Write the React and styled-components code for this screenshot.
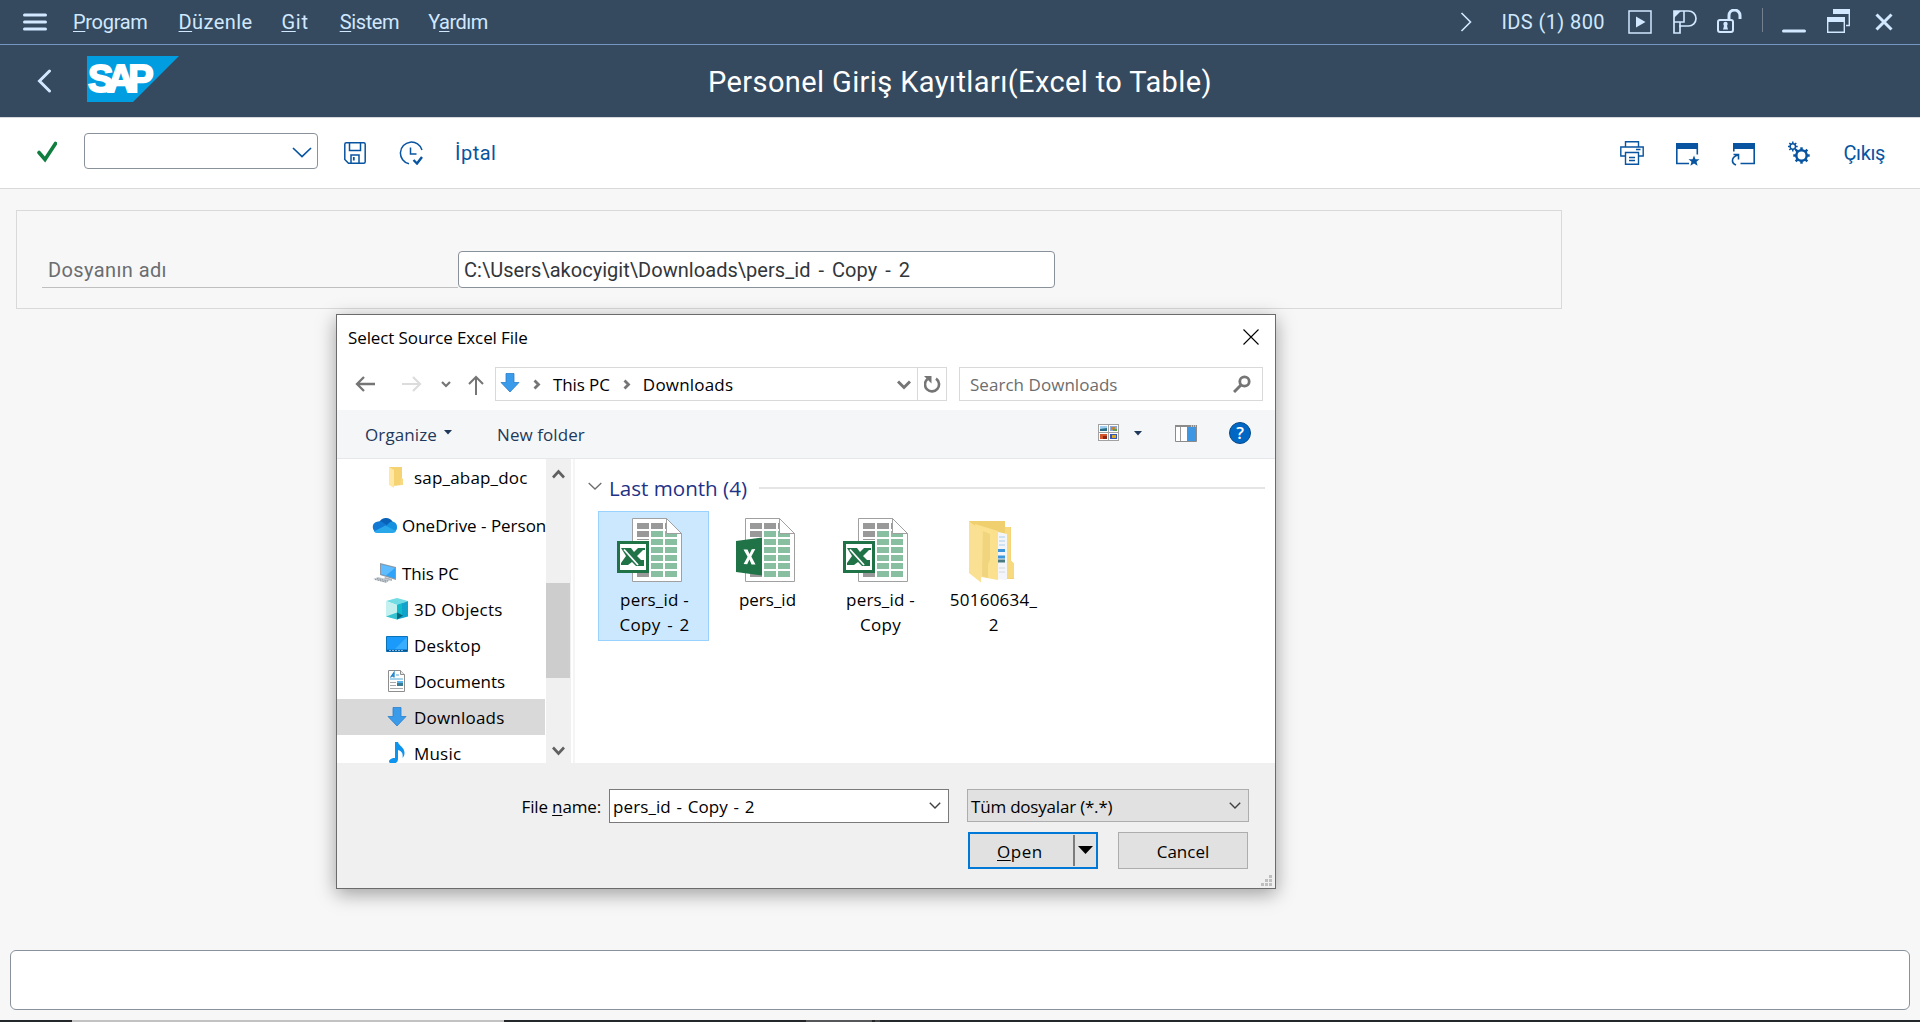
import React from 'react';
import styled, { createGlobalStyle, css } from 'styled-components';

const GlobalStyle = createGlobalStyle`
  * { box-sizing: border-box; }
  html, body { margin: 0; padding: 0; }
  body { width: 1920px; height: 1022px; overflow: hidden; background: #f7f7f7; }
`;

/* ---------- text ---------- */
const SapText = styled.span`
  font-family: Roboto, "Liberation Sans", sans-serif;
  font-size: ${(p) => p.$size || 20}px;
  line-height: ${(p) => p.$line || 30}px;
  letter-spacing: ${(p) => p.$ls || 0}px;
  word-spacing: ${(p) => p.$ws || 0}px;
  margin-left: ${(p) => p.$ml || 0}px;
  color: ${(p) => p.$color || 'inherit'};
  white-space: pre;
  u { text-decoration: underline; text-decoration-thickness: 1px; text-underline-offset: 2px; text-decoration-skip-ink: none; }
`;

const WinText = styled.span`
  font-family: "Open Sans", "Noto Sans", sans-serif;
  font-size: ${(p) => p.$size || 17}px;
  line-height: ${(p) => p.$line || 25}px;
  letter-spacing: ${(p) => p.$ls || 0}px;
  word-spacing: ${(p) => p.$ws || 0}px;
  margin-left: ${(p) => p.$ml || 0}px;
  color: ${(p) => p.$color || '#000'};
  white-space: pre;
  flex: none;
  u { text-decoration: underline; text-decoration-thickness: 1px; text-underline-offset: 2px; text-decoration-skip-ink: none; }
`;

const Icon = styled.svg.attrs((p) => ({
  width: p.$w, height: p.$h, viewBox: `0 0 ${p.$w} ${p.$h}`, fill: 'none',
}))`
  display: block;
  flex: none;
  margin-left: ${(p) => p.$ml || 0}px;
  margin-top: ${(p) => p.$mt || 0}px;
`;

/* ---------- page ---------- */
const Page = styled.div`
  position: relative;
  width: 1920px;
  height: 1022px;
  display: flex;
  flex-direction: column;
  background: #f7f7f7;
  overflow: hidden;
`;

const MenuBar = styled.header`
  display: flex;
  align-items: center;
  height: 45px;
  flex: none;
  padding-left: 23px;
  color: #d1e8ff;
  background: #354a5f;
  border-bottom: 1px solid #7596c0;
`;

const Spread = styled.div`flex: 1;`;

const Group = styled.div`
  display: flex;
  align-items: center;
  padding-right: ${(p) => p.$pr || 0}px;
`;

const MenuDivider = styled.div`
  width: 1px;
  height: 24px;
  margin-left: 20px;
  margin-top: -4px;
  background: #73818f;
`;

const TitleBar = styled.div`
  display: grid;
  grid-template-columns: 400px 1fr 400px;
  align-items: center;
  height: 73px;
  flex: none;
  background: #354a5f;
  border-bottom: 1px solid #d5d9dd;
`;

const TitleLeft = styled.div`
  display: flex;
  align-items: center;
  padding-left: 37px;
`;

const TitleText = styled.div`
  text-align: center;
  padding-top: 1px;
  color: #fff;
`;

const ActionBar = styled.div`
  display: flex;
  align-items: center;
  height: 71px;
  flex: none;
  padding-left: 37px;
  color: #0854a0;
  background: #fff;
  border-bottom: 1px solid #d9d9d9;
`;

const CommandField = styled.div`
  display: flex;
  align-items: center;
  justify-content: flex-end;
  width: 234px;
  height: 36px;
  margin: -4px 0 0 27px;
  padding: 2px 5px 0 0;
  border: 1px solid #89919a;
  border-radius: 4px;
  background: #fff;
`;

const FormPanel = styled.section`
  display: flex;
  align-items: flex-start;
  width: 1546px;
  height: 99px;
  margin: 21px 0 0 16px;
  padding: 40px 0 0 25px;
  border: 1px solid #d9d9d9;
  flex: none;
`;

const FieldLabel = styled.label`
  display: flex;
  align-items: center;
  width: 416px;
  height: 37px;
  padding: 1px 0 0 6px;
  color: #6a6d70;
  border-bottom: 1px solid #bfbfbf;
`;

const FieldInput = styled.div`
  display: flex;
  align-items: center;
  width: 597px;
  height: 37px;
  padding: 1px 0 0 5px;
  color: #32363a;
  background: #fff;
  border: 1px solid #89919a;
  border-radius: 4px;
`;

const StatusBox = styled.footer`
  flex: none;
  height: 60px;
  margin: auto 10px 10px;
  background: #fff;
  border: 1px solid #89919a;
  border-radius: 6px;
`;

const TaskStrip = styled.div`
  display: flex;
  height: 2px;
  flex: none;
  background: #24272a;
`;
const TaskSegment = styled.div`
  width: ${(p) => p.$w}px;
  background: ${(p) => p.$c};
`;

/* ---------- dialog ---------- */
const Dialog = styled.div`
  position: absolute;
  left: 336px;
  top: 314px;
  width: 940px;
  height: 575px;
  display: flex;
  flex-direction: column;
  background: #fff;
  border: 1px solid #6b6b6b;
  box-shadow: 0 5px 18px rgba(0, 0, 0, 0.36);
`;

const DialogTitle = styled.div`
  display: flex;
  align-items: center;
  justify-content: space-between;
  height: 45px;
  flex: none;
  padding: 0 16px 0 11px;
`;

const NavRow = styled.div`
  display: flex;
  align-items: center;
  height: 34px;
  flex: none;
  margin-top: 7px;
  padding-left: 18px;
`;

const NavBox = styled.div`
  display: flex;
  align-items: center;
  width: ${(p) => p.$w}px;
  height: 34px;
  margin-left: ${(p) => p.$ml}px;
  border: 1px solid #d9d9d9;
  background: #fff;
`;

const RefreshCell = styled.div`
  display: flex;
  align-items: center;
  justify-content: center;
  width: 29px;
  height: 32px;
  padding-left: 1px;
  border-left: 1px solid #d9d9d9;
`;

const ToolRow = styled.div`
  display: flex;
  align-items: center;
  height: 49px;
  flex: none;
  margin-top: 9px;
  padding: 0 24px 0 28px;
  background: #f5f6f7;
  border-bottom: 1px solid #e5e7ea;
`;

const Body = styled.div`
  display: flex;
  height: 304px;
  flex: none;
`;

const Tree = styled.nav`
  width: 209px;
  height: 304px;
  overflow: hidden;
`;

const TreeRow = styled.div`
  display: flex;
  align-items: center;
  width: ${(p) => (p.$active ? 208 : 209)}px;
  height: 36px;
  margin-bottom: ${(p) => p.$gap || 0}px;
  padding-left: ${(p) => (p.$nested ? 48 : 35)}px;
  ${(p) => p.$active && css`background: #d9d9d9;`}
`;

const ScrollBar = styled.div`
  display: flex;
  flex-direction: column;
  width: 25px;
  padding-bottom: 7px;
  background: #f0f0f0;
`;
const ScrollThumb = styled.div`
  width: 24px;
  height: 95px;
  margin-top: 104px;
  margin-bottom: auto;
  background: #cdcdcd;
`;
const PaneEdge = styled.div`
  width: 2px;
  margin-left: 2px;
  background: #f5f5f5;
`;

const Files = styled.div`
  flex: 1;
  padding-left: 13px;
`;

const GroupHeader = styled.div`
  display: flex;
  align-items: center;
  height: 30px;
  margin-top: 14px;
`;
const GroupLine = styled.div`
  width: 506px;
  height: 2px;
  margin-left: 12px;
  background: #e5e5e5;
`;

const Tiles = styled.div`
  display: flex;
  gap: 2px;
  margin: 8px 0 0 10px;
`;
const Tile = styled.div`
  display: flex;
  flex-direction: column;
  align-items: center;
  width: 111px;
  height: 130px;
  padding-top: 5px;
  border: 1px solid ${(p) => (p.$selected ? '#99d1ff' : 'transparent')};
  background: ${(p) => (p.$selected ? '#cce8ff' : 'transparent')};
`;
const TileLabel = styled.div`
  display: flex;
  flex-direction: column;
  align-items: center;
  margin-top: 4px;
  padding-left: 2px;
`;

const Footer = styled.div`
  display: grid;
  grid-template-columns: 272px 340px 18px 282px;
  grid-template-rows: 34px 37px;
  row-gap: 9px;
  flex: 1;
  padding-top: 26px;
  background: #f0f0f0;
`;
const FooterLabel = styled.div`
  display: flex;
  align-items: center;
  justify-content: flex-end;
  padding-right: 8px;
`;
const Combo = styled.div`
  display: flex;
  align-items: center;
  justify-content: space-between;
  height: ${(p) => p.$h}px;
  padding: 1px 7px 0 3px;
  background: ${(p) => (p.$filled ? '#e1e1e1' : '#fff')};
  border: 1px solid ${(p) => (p.$filled ? '#adadad' : '#7a7a7a')};
`;
const Buttons = styled.div`
  grid-column: 4;
  display: flex;
  gap: 20px;
  padding-left: 1px;
`;
const Button = styled.button`
  display: flex;
  align-items: center;
  justify-content: ${(p) => (p.$primary ? 'flex-start' : 'center')};
  width: 130px;
  height: 37px;
  padding: 1px 0 0;
  background: #e1e1e1;
  border: ${(p) => (p.$primary ? '2px solid #0078d7' : '1px solid #adadad')};
  border-radius: 0;
`;
const SplitLine = styled.div`
  width: 2px;
  height: 31px;
  margin-left: 30px;
  margin-top: -1px;
  background: #7c7c7c;
`;
const Grip = styled.div`
  position: absolute;
  right: 3px;
  bottom: 2px;
`;

/* ---------- drawings ---------- */
const DownArrow = ({ ml, mt }) => (
  <Icon $w={20} $h={20} $ml={ml} $mt={mt}>
    <path d="M6 .5h8v9h5L10 19 1 9.500h5z" fill="#3a9bea" stroke="#2b7fcb" strokeWidth=".8" />
  </Icon>
);

const Sheet = () => (
  <>
    <path d="M15.500 1.500h34l15 15v48h-49z" fill="#fff" stroke="#a0a0a0" />
    {[6, 14, 22, 30, 38, 46, 54].map((y, r) =>
      [20, 34, 48].map((x, c) => {
        if (c === 2 && r === 0) return <path key={x} d="M48 6h1.500v6H48z" fill="#999" />;
        if (c === 2 && r === 1) return <path key={x} d="M48 14h2v2.500h10V20H48z" fill="#87bfa0" />;
        return <rect key={x} x={x} y={y} width="12" height="6" fill={c === 0 || r === 0 ? '#999' : '#87bfa0'} />;
      })
    )}
    <path d="M49.500 1.500v15h15z" fill="#fff" stroke="#a0a0a0" />
  </>
);

const OldExcel = () => (
  <Icon $w={73} $h={66}>
    <Sheet />
    <path d="M16 23h17v33H16z" fill="#fff" />
    <path d="M1.500 25.500h29v29h-29z" fill="#fff" stroke="#207347" strokeWidth="3" />
    <path d="M4 31h10l3 4 4-4h7v2h-2l-6 6 4 4h3v6h-8l-4-4-4 3H4v-2l5-7z" fill="#207347" />
    <path d="M7 32.500L21 48" stroke="#fff" strokeWidth="1.800" />
  </Icon>
);

const NewExcel = () => (
  <Icon $w={73} $h={66}>
    <Sheet />
    <path d="M6 24l26-3.500v38L6 55z" fill="#207347" />
    <path d="M13.500 32.500h4l2 4.500 2.300-4.800 3.500-.2-4 7.500 4.200 8h-3.900l-2.200-5-2.200 4.700-3.600-.2 4-7.300z" fill="#fff" />
  </Icon>
);

const FolderLarge = () => (
  <Icon $w={73} $h={66}>
    <path d="M13 4h36v6h6v34l3 3v15H40z" fill="#f0cf6e" />
    <path d="M49 10h5.500v33l3.500 3.500V61l-9 1z" fill="#f7d97f" />
    <path d="M38 14l13 3v46l-12-1z" fill="#f3f5f8" />
    <path d="M43 20h6M43 24h6M43 28h6" stroke="#a9d0f0" strokeWidth="1.200" />
    <path d="M42 33.500h7M42 40h7" stroke="#3e97dd" strokeWidth="3" />
    <path d="M42 44h7" stroke="#4a7a80" strokeWidth="3" />
    <path d="M43 51h6M43 55h6" stroke="#d5d8de" />
    <path d="M19 7l23 7v49l-17-3z" fill="#fbe08d" />
    <path d="M27 14l7 3v26l-2 4v14l-6-2z" fill="#ecd079" opacity=".75" />
    <path d="M13 4.500l13 9V49l-1 4v12.500L13 56z" fill="#fae092" />
  </Icon>
);

const SmallFolder = () => (
  <Icon $w={24} $h={24}>
    <path d="M4 2h13v18l-9 1-4-2z" fill="#f5d272" />
    <path d="M16 12l2 2v6h-3z" fill="#f7da84" />
    <path d="M4 2l5 3v18l-5-3z" fill="#ffe8a3" />
  </Icon>
);

const Cloud = () => (
  <Icon $w={26} $h={18} $mt={-1}>
    <path d="M7 7a7.500 7.500 0 0 1 13.500-1.500L22 12H6z" fill="#0a62b8" />
    <path d="M5.500 16.500A5.500 5.500 0 0 1 5 5.700 6 6 0 0 1 10 6l8 5-10 6z" fill="#1179d4" />
    <path d="M20 5.500a5 5 0 0 1 5 5.500 5 5 0 0 1-3 5l-8-6 3-3a6 6 0 0 1 3-1.500z" fill="#1490df" />
    <path d="M13.500 9.500L24 15a4 4 0 0 1-3 2H5.500a5 5 0 0 1-3.700-1.600z" fill="#28a8ea" />
  </Icon>
);

const Computer = () => (
  <Icon $w={26} $h={24}>
    <path d="M8 2l16 4v13L8 14z" fill="#8d9aa5" />
    <path d="M9 3.500l14 3.500v10.500L9 13z" fill="#2ea3f7" />
    <path d="M9 3.500L23 7l-9 7.500L9 13z" fill="#5ebcff" />
    <path d="M13 16l7 2v2l-8-2z" fill="#aeb5bc" />
    <path d="M1 18l5-2 12 3-4 3z" fill="#c5ccd2" />
    <path d="M3 18.500l11 2.500M5 17.500l11 2.500" stroke="#8b949c" strokeDasharray="1.500 1" />
  </Icon>
);

const Cube = () => (
  <Icon $w={24} $h={24}>
    <path d="M12 1l11 3-11 4L1 4z" fill="#71dce4" />
    <path d="M1 4l11 4v14.500L1 19.500z" fill="#c4f1f0" />
    <path d="M23 4L12 8v14.500l11-3z" fill="#10a4cc" />
    <path d="M12 8l5-1.800v12L12 17z" fill="#0ebbcb" />
    <path d="M1 19.500l11-4v7z" fill="#35c3d2" />
    <path d="M12 15.500l6 3-6 4z" fill="#07697c" />
  </Icon>
);

const Monitor = () => (
  <Icon $w={24} $h={20} $mt={-2}>
    <path d="M1.500 2.500h21v15h-21z" fill="#1a9bfc" stroke="#0c72b8" />
    <path d="M22 3v12H10z" fill="#39adff" />
    <path d="M2 16.500h20" stroke="#0a5184" strokeWidth="1.500" />
    <path d="M4 16.500h14" stroke="#9fd5ff" strokeWidth=".8" strokeDasharray="2 1" />
  </Icon>
);

const DocIcon = () => (
  <Icon $w={24} $h={24}>
    <path d="M3.500 1.500h12l4 4v17h-16z" fill="#fff" stroke="#8e8e8e" />
    <path d="M15.500 1.500v4h4" fill="#e8e8e8" stroke="#8e8e8e" />
    <path d="M5.500 8.500L9 3.500v5M6.500 7h3" stroke="#1d80c8" strokeWidth="1.300" />
    <path d="M11 6h3M5 10h13" stroke="#53a8dc" />
    <path d="M5 13.500h6M5 16.500h6M5 19.500h13" stroke="#a5a9ad" />
    <path d="M12 12h6v5h-6z" fill="#3a7c94" />
    <path d="M12 12h6v2h-6z" fill="#58b1ec" />
  </Icon>
);

const Note = () => (
  <Icon $w={24} $h={24}>
    <path d="M10 1h3c1 4 6.500 5 6.500 11 0 2-1 4-2 5 .8-5-1-7-4.500-8v9c0 3-2 4.500-4.500 4.500S4 22 4 20.500 6 17 10 17z" fill="#0e93ee" />
  </Icon>
);

const TREE = [
  { text: 'sap_abap_doc', ls: 0.19, icon: <SmallFolder />, nested: true, gap: 12 },
  { text: 'OneDrive - Person', ls: -0.02, icon: <Cloud />, gap: 12 },
  { text: 'This PC', ls: -0.1, icon: <Computer /> },
  { text: '3D Objects', ls: 0.23, icon: <Cube />, nested: true },
  { text: 'Desktop', ls: 0.2, icon: <Monitor />, nested: true },
  { text: 'Documents', ls: 0.02, icon: <DocIcon />, nested: true },
  { text: 'Downloads', ls: 0.2, icon: <DownArrow ml={2} mt={-1} />, nested: true, active: true },
  { text: 'Music', ls: 0.2, icon: <Note />, nested: true },
];

const FILES = [
  { icon: <OldExcel />, selected: true, lines: [['pers_id -', 0.2, 0], ['Copy - 2', 0.3, 1.8]] },
  { icon: <NewExcel />, lines: [['pers_id', 0, 0]] },
  { icon: <OldExcel />, lines: [['pers_id -', 0.2, 0], ['Copy', 0.3, 0]] },
  { icon: <FolderLarge />, lines: [['50160634_', 0.25, 0], ['2', 0, 0]] },
];

const MENU = [
  { ml: 26, ls: -0.3, parts: ['', 'P', 'rogram'] },
  { ml: 31, ls: 0.4, parts: ['', 'D', 'üzenle'] },
  { ml: 29, ls: 0.75, parts: ['', 'G', 'it'] },
  { ml: 31, ls: -0.36, parts: ['', 'S', 'istem'] },
  { ml: 29, ls: -0.5, parts: ['Y', 'a', 'rdım'] },
];

const BREADCRUMB = 'M1.500 1.500l4 4-4 4';

function Gear({ cx, cy, r, teeth, w, hole }) {
  return (
    <g stroke="#0854a0">
      <circle cx={cx} cy={cy} r={r} strokeWidth={w} />
      {Array.from({ length: teeth }, (_, i) => {
        const a = (i * 2 * Math.PI) / teeth;
        return (
          <path key={i} strokeWidth={w}
            d={`M${cx + Math.cos(a) * r} ${cy + Math.sin(a) * r}L${cx + Math.cos(a) * (r + hole)} ${cy + Math.sin(a) * (r + hole)}`} />
        );
      })}
    </g>
  );
}

export default function App() {
  return (
    <Page>
      <GlobalStyle />
      <MenuBar>
        <Icon $w={24} $h={18} $mt={-1}>
          <path d="M1.500 2h21M1.500 9h21M1.500 16h21" stroke="#d1e8ff" strokeWidth="3" strokeLinecap="round" />
        </Icon>
        {MENU.map((m) => (
          <SapText key={m.parts[1]} $ml={m.ml} $ls={m.ls}>{m.parts[0]}<u>{m.parts[1]}</u>{m.parts[2]}</SapText>
        ))}
        <Spread />
        <Group $pr={27}>
          <Icon $w={12} $h={20} $mt={-1}><path d="M1.500 1l9 9-9 9" stroke="#d1e8ff" strokeWidth="1.600" /></Icon>
          <SapText $ml={29} $ls={0.4}>IDS (1) 800</SapText>
          <Icon $w={24} $h={24} $ml={23} $mt={-1}>
            <path d="M1 1h22v22H1z" stroke="#d1e8ff" strokeWidth="1.500" />
            <path d="M8 6.500l9.500 5.500L8 17.500z" fill="#d1e8ff" />
          </Icon>
          <Icon $w={24} $h={24} $ml={21} $mt={-1}>
            <path d="M1 1h14.500a7.500 7.500 0 0 1 0 15H7v7H1z" stroke="#d1e8ff" strokeWidth="1.700" />
            <path d="M1 12h10V1M7 12v5" stroke="#d1e8ff" strokeWidth="1.600" />
            <path d="M1 1h7L1 8z" fill="#d1e8ff" />
          </Icon>
          <Icon $w={25} $h={24} $ml={20} $mt={-2}>
            <path d="M12 11V6.500a5.500 5.500 0 0 1 11 0V10" stroke="#d1e8ff" strokeWidth="3" />
            <rect x="1" y="11" width="15" height="12" rx="2" stroke="#d1e8ff" strokeWidth="2" />
            <circle cx="8.500" cy="15" r="2.200" fill="#d1e8ff" />
            <path d="M7.500 15h2l1.500 5.500H6z" fill="#d1e8ff" />
          </Icon>
          <MenuDivider />
          <Icon $w={24} $h={24} $ml={19} $mt={-3}>
            <path d="M1.500 22h21" stroke="#d1e8ff" strokeWidth="3" strokeLinecap="round" />
          </Icon>
          <Icon $w={24} $h={24} $ml={21} $mt={-2}>
            <path d="M6 0h17v5H6z" fill="#d1e8ff" />
            <path d="M22.300 2v14.500H19" stroke="#d1e8ff" strokeWidth="1.400" />
            <path d="M.7 8.700h16.600v14.600H.7z" stroke="#d1e8ff" strokeWidth="1.400" />
            <path d="M0 8h18v5H0z" fill="#d1e8ff" />
          </Icon>
          <Icon $w={18} $h={18} $ml={24} $mt={-1}>
            <path d="M1.500 1.500l15 15M16.500 1.500l-15 15" stroke="#d1e8ff" strokeWidth="3" />
          </Icon>
        </Group>
      </MenuBar>

      <TitleBar>
        <TitleLeft>
          <Icon $w={15} $h={24} $mt={-1}><path d="M12.500 2l-10 10 10 10" stroke="#d1e8ff" strokeWidth="3" strokeLinecap="round" /></Icon>
          <Icon $w={92} $h={46} $ml={35} $mt={-4}>
            <path d="M0 0h92L46 46H0z" fill="#009de0" />
            <text x="1" y="35.500" fill="#fff" stroke="#fff" strokeWidth="1.900" fontFamily='"Liberation Sans", sans-serif'
              fontWeight="700" fontSize="38" textLength="65.500" lengthAdjust="spacing">SAP</text>
          </Icon>
        </TitleLeft>
        <TitleText><SapText $size={29} $line={40} $ls={0.39}>Personel Giriş Kayıtları(Excel to Table)</SapText></TitleText>
      </TitleBar>

      <ActionBar>
        <Icon $w={20} $h={22} $mt={-2}><path d="M2 11.500l6 7L18.500 2.500" stroke="#107e3e" strokeWidth="3.600" strokeLinecap="round" /></Icon>
        <CommandField>
          <Icon $w={20} $h={11}><path d="M1 1l9 8.500L19 1" stroke="#0854a0" strokeWidth="1.700" /></Icon>
        </CommandField>
        <Icon $w={22} $h={22} $ml={26}>
          <path d="M.8 2.300C.8 1.500 1.500.8 2.300.8h17.400c.8 0 1.500.7 1.500 1.500v17.400c0 .8-.7 1.500-1.500 1.500H4.500L.8 17.500z" stroke="#0854a0" strokeWidth="1.500" />
          <path d="M5.500 1v7.500h11V1" stroke="#0854a0" strokeWidth="1.500" />
          <path d="M7 21v-8h8v8" stroke="#0854a0" strokeWidth="1.500" />
          <path d="M9.800 15v3.500" stroke="#0854a0" strokeWidth="1.800" />
        </Icon>
        <Icon $w={24} $h={24} $ml={33}>
          <path d="M23 9A11 11 0 1 0 10 22.800" stroke="#0854a0" strokeWidth="1.500" />
          <path d="M11.500 6.500v6.500h6" stroke="#0854a0" strokeWidth="1.500" />
          <path d="M14.500 19l3.500 3.500 5-6.500" stroke="#0854a0" strokeWidth="2.400" />
        </Icon>
        <SapText $ml={32} $ls={0.5}>İptal</SapText>
        <Spread />
        <Group $pr={35}>
          <Icon $w={24} $h={24}>
            <g stroke="#0854a0" strokeWidth="1.400">
              <path d="M5.500 6V.8h13V6M5.500 15H.8V6h22.400v9h-4.700" />
              <path d="M5.500 11.500h13v11.700h-13zM9 16.500h6M9 19.500h6M16 8.500h4.500" />
            </g>
          </Icon>
          <Icon $w={24} $h={24} $ml={32} $mt={1}>
            <path d="M0 1h22v6H0z" fill="#0854a0" />
            <path d="M.8 2v19.500H13M21.300 2v10.500" stroke="#0854a0" strokeWidth="1.600" />
            <path d="M18 13.500l1.500 3.700h4l-3 2.500 1.100 4.100-3.600-2.400-3.600 2.400 1.100-4.100-3-2.500h4z" fill="#0854a0" />
          </Icon>
          <Icon $w={24} $h={24} $ml={31} $mt={1}>
            <path d="M2 1h22v6H2z" fill="#0854a0" />
            <path d="M2.800 2v7.500M23.200 2v19.500H9.500" stroke="#0854a0" strokeWidth="1.600" />
            <path d="M5 23c-5-2-5-8 2-10M2.500 12.500h5v5" stroke="#0854a0" strokeWidth="1.600" />
          </Icon>
          <Icon $w={24} $h={24} $ml={33}>
            <Gear cx={4.800} cy={5.500} r={2.700} teeth={8} w={1.500} hole={2.200} />
            <Gear cx={13.500} cy={14.500} r={5.200} teeth={8} w={2.500} hole={3} />
          </Icon>
          <SapText $ml={31} $ls={-0.36}>Çıkış</SapText>
        </Group>
      </ActionBar>

      <FormPanel>
        <FieldLabel><SapText $ls={0.4}>Dosyanın adı</SapText></FieldLabel>
        <FieldInput><SapText $ls={0.04} $ws={3}>{'C:\\Users\\akocyigit\\Downloads\\pers_id - Copy - 2'}</SapText></FieldInput>
      </FormPanel>

      <StatusBox />
      <TaskStrip>
        <TaskSegment $w={72} $c="#24272a" />
        <TaskSegment $w={432} $c="#c2c2c2" />
        <TaskSegment $w={302} $c="#24272a" />
        <TaskSegment $w={66} $c="#555759" />
        <TaskSegment $w={3} $c="#24272a" />
        <TaskSegment $w={5} $c="#444648" />
      </TaskStrip>

      <Dialog>
        <DialogTitle>
          <WinText $ls={-0.1}>Select Source Excel File</WinText>
          <Icon $w={16} $h={16} $mt={-2}><path d="M.5.5l15 15M15.500.5l-15 15" stroke="#000" strokeWidth="1.100" /></Icon>
        </DialogTitle>

        <NavRow>
          <Icon $w={20} $h={16}><path d="M9 1L2 8l7 7M2 8h18" stroke="#757575" strokeWidth="2.300" /></Icon>
          <Icon $w={20} $h={16} $ml={27}><path d="M11 1l7 7-7 7M18 8H0" stroke="#dcdcdc" strokeWidth="2.200" /></Icon>
          <Icon $w={10} $h={7} $ml={19}><path d="M1 1l4 4 4-4" stroke="#757575" strokeWidth="2.200" /></Icon>
          <Icon $w={16} $h={20} $ml={17} $mt={2}><path d="M1 9l7-7 7 7M8 2v18" stroke="#757575" strokeWidth="2" /></Icon>
          <NavBox $w={452} $ml={11}>
            <DownArrow ml={4} mt={-3} />
            <Icon $w={8} $h={11} $ml={13}><path d={BREADCRUMB} stroke="#757575" strokeWidth="2.800" /></Icon>
            <WinText $ml={12} $ls={-0.1}>This PC</WinText>
            <Icon $w={8} $h={11} $ml={13}><path d={BREADCRUMB} stroke="#757575" strokeWidth="2.800" /></Icon>
            <WinText $ml={12} $ls={0.2}>Downloads</WinText>
            <Spread />
            <Icon $w={14} $h={10} $mt={2}><path d="M1 1.500l6 6 6-6" stroke="#757575" strokeWidth="3" /></Icon>
            <Icon $w={6} $h={10} />
            <RefreshCell>
              <Icon $w={17} $h={17}>
                <path d="M12 2.600A7 7 0 1 1 3.500 3" stroke="#757575" strokeWidth="2.600" />
                <path d="M0 0h7.500v7.500z" fill="#757575" />
              </Icon>
            </RefreshCell>
          </NavBox>
          <NavBox $w={304} $ml={12}>
            <WinText $ml={10} $ls={0.04} $color="#6d6d6d">Search Downloads</WinText>
            <Spread />
            <Icon $w={18} $h={18}>
              <circle cx="11.500" cy="6.500" r="4.700" stroke="#757575" strokeWidth="2.800" />
              <path d="M8 10l-7 7" stroke="#757575" strokeWidth="3" />
            </Icon>
            <Icon $w={11} $h={10} />
          </NavBox>
        </NavRow>

        <ToolRow>
          <WinText $ls={0.12} $color="#1e395b">Organize</WinText>
          <Icon $w={8} $h={5} $ml={7} $mt={-3}><path d="M0 0h8L4 4.500z" fill="#1e395b" /></Icon>
          <WinText $ml={45} $ls={0.07} $color="#1e395b">New folder</WinText>
          <Spread />
          <Icon $w={21} $h={17} $mt={-4}>
            <path d="M0 0h21v17H0z" fill="#a2a2a2" />
            <path d="M1 1h9v7H1zM11 1h9v7h-9zM1 9h9v7H1zM11 9h9v7h-9z" fill="#fff" />
            <path d="M2 2h7v5H2z" fill="#9fcdf0" />
            <path d="M2 5l7-1v3H2z" fill="#2b6d86" />
            <path d="M12 2h7v5h-7z" fill="#8aa9d8" />
            <path d="M13 3h4v3h-4z" fill="#c1853e" />
            <path d="M15 5h4v2h-4z" fill="#5d9f4e" />
            <path d="M2 10h7v5H2z" fill="#d4552b" />
            <path d="M5 12h4v3H5z" fill="#8f2412" />
            <path d="M12 10h7v5h-7z" fill="#3657b8" />
            <path d="M14 11h4v3h-4z" fill="#d8a928" />
          </Icon>
          <Icon $w={8} $h={5} $ml={15} $mt={-1}><path d="M0 0h8L4 4.500z" fill="#1e395b" /></Icon>
          <Icon $w={22} $h={17} $ml={33} $mt={-2}>
            <path d="M.5.5h21v16H.5z" fill="#fff" stroke="#8b8b8b" />
            <path d="M0 0h22v2H0z" fill="#8b8b8b" />
            <path d="M5.500 2v14" stroke="#9b9b9b" />
            <path d="M12 2h9v14h-9z" fill="#3f97e3" />
            <path d="M16 1h1M18 1h1M20 1h1" stroke="#fff" />
          </Icon>
          <Icon $w={22} $h={22} $ml={32} $mt={-2}>
            <circle cx="11" cy="11" r="10.500" fill="#0067c5" stroke="#064a8a" />
            <text x="11" y="17" fill="#fff" fontFamily='"Open Sans", sans-serif' fontSize="17" fontWeight="600" textAnchor="middle">?</text>
          </Icon>
        </ToolRow>

        <Body>
          <Tree>
            {TREE.map((t) => (
              <TreeRow key={t.text} $nested={t.nested} $gap={t.gap} $active={t.active}>
                {t.icon}
                <WinText $line={19} $ml={t.active ? 7 : t.nested ? 5 : 4} $ls={t.ls}>{t.text}</WinText>
              </TreeRow>
            ))}
          </Tree>
          <ScrollBar>
            <Icon $w={13} $h={10} $ml={6} $mt={10}><path d="M1 8.500l5.500-6 5.500 6" stroke="#606060" strokeWidth="2.600" /></Icon>
            <ScrollThumb />
            <Icon $w={13} $h={10} $ml={6}><path d="M1 1.500l5.500 6 5.500-6" stroke="#606060" strokeWidth="2.600" /></Icon>
          </ScrollBar>
          <PaneEdge />
          <Files>
            <GroupHeader>
              <Icon $w={14} $h={8} $mt={-4}><path d="M.7 1l6.300 6 6.300-6" stroke="#6d6d6d" strokeWidth="1.300" /></Icon>
              <WinText $size={20.600} $line={30} $ml={7} $color="#1e3287">Last month (4)</WinText>
              <GroupLine />
            </GroupHeader>
            <Tiles>
              {FILES.map((f, i) => (
                <Tile key={i} $selected={f.selected}>
                  {f.icon}
                  <TileLabel>
                    {f.lines.map(([t, ls, ws]) => <WinText key={t} $ls={ls} $ws={ws}>{t}</WinText>)}
                  </TileLabel>
                </Tile>
              ))}
            </Tiles>
          </Files>
        </Body>

        <Footer>
          <FooterLabel><WinText $ls={-0.15}>File <u>n</u>ame:</WinText></FooterLabel>
          <Combo $h={34}>
            <WinText $ls={0.1} $ws={1.100}>pers_id - Copy - 2</WinText>
            <Icon $w={12} $h={7} $mt={-3}><path d="M.8.8L6 6 11.200.8" stroke="#404040" strokeWidth="1.400" /></Icon>
          </Combo>
          <span />
          <Combo $h={33} $filled>
            <WinText $ls={-0.2}>Tüm dosyalar (*.*)</WinText>
            <Icon $w={12} $h={7} $mt={-2}><path d="M.8.8L6 6 11.200.8" stroke="#404040" strokeWidth="1.400" /></Icon>
          </Combo>
          <Buttons>
            <Button $primary>
              <WinText $ml={27} $ls={0.5}><u>O</u>pen</WinText>
              <SplitLine />
              <Icon $w={16} $h={8} $ml={3} $mt={-2}><path d="M0 0h15L7.500 8z" fill="#000" /></Icon>
            </Button>
            <Button><WinText>Cancel</WinText></Button>
          </Buttons>
          <Grip>
            <Icon $w={11} $h={11}>
              <path d="M8 0h3v3H8zM4 4h3v3H4zM8 4h3v3H8zM0 8h3v3H0zM4 8h3v3H4zM8 8h3v3H8z" fill="#bfbfbf" />
            </Icon>
          </Grip>
        </Footer>
      </Dialog>
    </Page>
  );
}
